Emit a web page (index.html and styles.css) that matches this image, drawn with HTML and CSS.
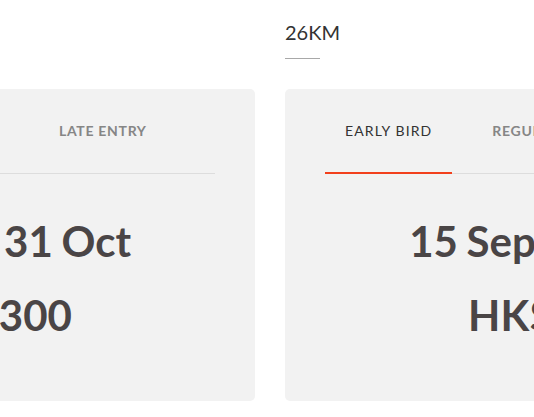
FILE: index.html
```html
<!DOCTYPE html>
<html lang="en">
<head>
<meta charset="utf-8">
<title>Race pricing</title>
<link rel="stylesheet" href="styles.css">
</head>
<body>
<div class="stage">
  <div class="race-head">
    <h2 class="race-title">26KM</h2>
    <div class="race-rule"></div>
  </div>
  <div class="track">
    <section class="card">
      <nav class="tabs tabs-loose">
        <span class="tab">EARLY BIRD</span>
        <span class="tab">REGULAR</span>
        <span class="tab">LATE ENTRY</span>
      </nav>
      <p class="date">16 Oct - 31 Oct</p>
      <p class="price">HK$ 300</p>
    </section>
    <section class="card">
      <nav class="tabs">
        <span class="tab tab-active">EARLY BIRD</span>
        <span class="tab">REGULAR</span>
        <span class="tab">LATE ENTRY</span>
      </nav>
      <p class="date">15 Sep - 15 Oct</p>
      <p class="price">HK$ 250</p>
    </section>
  </div>
</div>
</body>
</html>
```
FILE: styles.css
```css
html, body {
  margin: 0;
  padding: 0;
  background: #ffffff;
  overflow: hidden;
}
body {
  font-family: Lato, "Open Sans", sans-serif;
  width: 534px;
  height: 417px;
}
.stage {
  padding-left: 285px;
  padding-top: 20px;
}
.race-head {
  display: flex;
  flex-direction: column;
  align-items: flex-start;
}
.race-title {
  margin: 0;
  font-size: 20px;
  line-height: 24px;
  font-weight: 400;
  color: #333333;
}
.race-rule {
  margin-top: 14px;
  width: 35px;
  height: 1px;
  background: #a8a8a8;
}
.track {
  margin-top: 30px;
  margin-left: -565px;
  display: flex;
  gap: 30px;
  width: 2000px;
}
.card {
  flex: 0 0 auto;
  box-sizing: border-box;
  width: 535px;
  height: 312px;
  border-radius: 5px;
  background: #f2f2f2;
  padding: 0 40px;
  display: flex;
  flex-direction: column;
}
.tabs {
  display: flex;
  gap: 20px;
  border-bottom: 1px solid #dddddd;
}
.tabs-loose {
  gap: 23px;
}
.tab {
  padding: 34px 20px 33px;
  font-size: 14px;
  line-height: 16px;
  font-weight: 700;
  letter-spacing: 0.7px;
  color: #868686;
  white-space: nowrap;
  border-bottom: 2px solid transparent;
  margin-bottom: -1px;
}
.tab-active {
  color: #333333;
  font-weight: 400;
  letter-spacing: 1.1px;
  border-bottom-color: #f2401c;
}
.date, .price {
  margin: 0;
  text-align: center;
  font-size: 42px;
  line-height: 50px;
  font-weight: 700;
  color: #4a4546;
  white-space: nowrap;
}
.date {
  margin-top: 42px;
  word-spacing: -1.5px;
}
.price {
  margin-top: 24px;
}
```
